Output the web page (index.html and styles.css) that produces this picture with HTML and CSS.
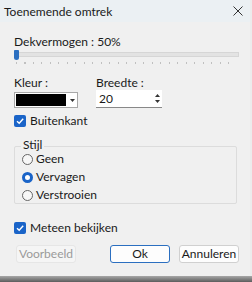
FILE: index.html
```html
<!DOCTYPE html>
<html>
<head>
<link rel="stylesheet" href="styles.css">
</head>
<body>
<div class="venster">
  <div class="titel">
    <span>Toenemende omtrek</span>
    <svg class="sluit" width="10" height="10" viewBox="0 0 10 10"><path d="M0.5 0.5 L9.5 9.5 M9.5 0.5 L0.5 9.5" stroke="#333" stroke-width="1"/></svg>
  </div>
  <div class="inhoud">
    <div class="label">Dekvermogen : 50%</div>
    <div class="schuif">
      <div class="spoor"></div>
      <div class="knop"></div>
      <div class="streepjes"></div>
    </div>

    <div class="rij">
      <div class="kolom">
        <div class="label">Kleur :</div>
        <div class="kleurvak">
          <div class="zwart"></div>
          <div class="pijl"><svg width="5" height="3" viewBox="0 0 5 3"><path d="M0 0 H5 L2.5 3 Z" fill="#333"/></svg></div>
        </div>
      </div>
      <div class="kolom">
        <div class="label">Breedte :</div>
        <div class="getal">
          <span>20</span>
          <div class="spin">
            <svg width="5" height="3" viewBox="0 0 5 3"><path d="M0 3 H5 L2.5 0 Z" fill="#333"/></svg>
            <svg width="5" height="3" viewBox="0 0 5 3"><path d="M0 0 H5 L2.5 3 Z" fill="#333"/></svg>
          </div>
        </div>
      </div>
    </div>

    <label class="vink"><span class="vakje"><svg width="10" height="10" viewBox="0 0 10 10"><path d="M2 5.2 L4.2 7.3 L8.2 2.8" stroke="#fff" stroke-width="1.4" fill="none"/></svg></span>Buitenkant</label>

    <div class="groep">
      <span class="groepnaam">Stijl</span>
      <label class="keuze"><span class="rondje"></span>Geen</label>
      <label class="keuze"><span class="rondje aan"></span>Vervagen</label>
      <label class="keuze"><span class="rondje"></span>Verstrooien</label>
    </div>

    <label class="vink meteen"><span class="vakje"><svg width="10" height="10" viewBox="0 0 10 10"><path d="M2 5.2 L4.2 7.3 L8.2 2.8" stroke="#fff" stroke-width="1.4" fill="none"/></svg></span>Meteen bekijken</label>

    <div class="knoppen">
      <div class="btn uit">Voorbeeld</div>
      <div class="btn ok">Ok</div>
      <div class="btn">Annuleren</div>
    </div>
  </div>
</div>
<div class="schaduw"></div>
</body>
</html>
```

FILE: styles.css
```css
body {
  margin: 0;
  background-color: #ececec;
  font-family: Lato, "Noto Sans", sans-serif;
  font-size: 12px;
  color: #1a1a1a;
}

.venster {
  width: 250px;
  height: 276px;
  background-color: #f0f0f0;
}

.schaduw {
  height: 6px;
  background: linear-gradient(#a8a8a8, #5c5c5c);
}

.titel {
  height: 22px;
  background-color: #ebf0f3;
  display: flex;
  justify-content: space-between;
  align-items: center;
  padding: 0 7px 0 4px;
}

.inhoud {
  padding: 12px 11px 0 14px;
}

.label {
  line-height: 16px;
}

.schuif {
  position: relative;
  height: 16px;
  margin-bottom: 9px;
}

.spoor {
  position: absolute;
  left: 0;
  right: 0;
  top: 2px;
  height: 3px;
  background-color: #e3e3e3;
  border: 1px solid #d6d6d6;
}

.knop {
  position: absolute;
  left: 0;
  top: 0;
  width: 5px;
  height: 10px;
  background-color: #2b6fc0;
  border-radius: 1px 1px 3px 3px;
}

.streepjes {
  position: absolute;
  left: 2px;
  right: 2px;
  top: 12px;
  height: 2px;
  background-image: repeating-linear-gradient(90deg, #c0c0c0 0 1px, transparent 1px 8.5px);
}

.rij {
  display: flex;
  gap: 16px;
}

.kolom {
  width: 66px;
}

.kleurvak {
  margin-top: 1px;
  width: 64px;
  height: 16px;
  display: flex;
  border: 1px solid #a8a8a8;
  background-color: #fff;
  box-sizing: border-box;
}

.zwart {
  flex: 1;
  background-color: #000;
  margin: 1px;
}

.pijl {
  width: 10px;
  display: flex;
  align-items: center;
  justify-content: center;
}

.getal {
  margin-top: -1px;
  height: 18px;
  display: flex;
  justify-content: space-between;
  background-color: #fff;
  border-bottom: 1px solid #888;
  padding-left: 3px;
  line-height: 18px;
  box-sizing: border-box;
}

.spin {
  display: flex;
  flex-direction: column;
  justify-content: center;
  align-items: center;
  gap: 3px;
  width: 10px;
}

.vink {
  display: flex;
  align-items: center;
  gap: 4px;
  margin-top: 5px;
  line-height: 16px;
}

.vakje {
  width: 12px;
  height: 12px;
  border-radius: 2px;
  background-color: #1a64c8;
  display: flex;
  align-items: center;
  justify-content: center;
}

.groep {
  position: relative;
  margin: 17px 2px 0 0;
  border: 1px solid #dcdcdc;
  border-radius: 2px;
  padding: 3px 0 0 7px;
  height: 58px;
  box-sizing: border-box;
}

.groepnaam {
  position: absolute;
  top: -10px;
  left: 6px;
  padding: 0 2px;
  background-color: #f0f0f0;
  line-height: 16px;
}

.keuze {
  display: flex;
  align-items: center;
  gap: 3px;
  line-height: 18px;
}

.rondje {
  width: 11px;
  height: 11px;
  border: 1px solid #666;
  border-radius: 50%;
  background-color: #f7f7f7;
  box-sizing: border-box;
}

.rondje.aan {
  border: 3px solid #1a64c8;
  background-color: #fff;
}

.meteen {
  margin-top: 16px;
}

.knoppen {
  display: flex;
  margin-top: 9px;
  margin-left: 2px;
}

.btn {
  width: 60px;
  height: 18px;
  line-height: 16px;
  text-align: center;
  background-color: #fdfdfd;
  border: 1px solid #d0d0d0;
  border-radius: 3px;
  box-sizing: border-box;
  margin-left: 9px;
}

.btn.uit {
  margin-left: 0;
  margin-right: 25px;
  color: #9a9a9a;
  background-color: #f5f5f5;
  border-color: #e6e6e6;
}

.btn.ok {
  border: 1px solid #2b6fc0;
}
```
